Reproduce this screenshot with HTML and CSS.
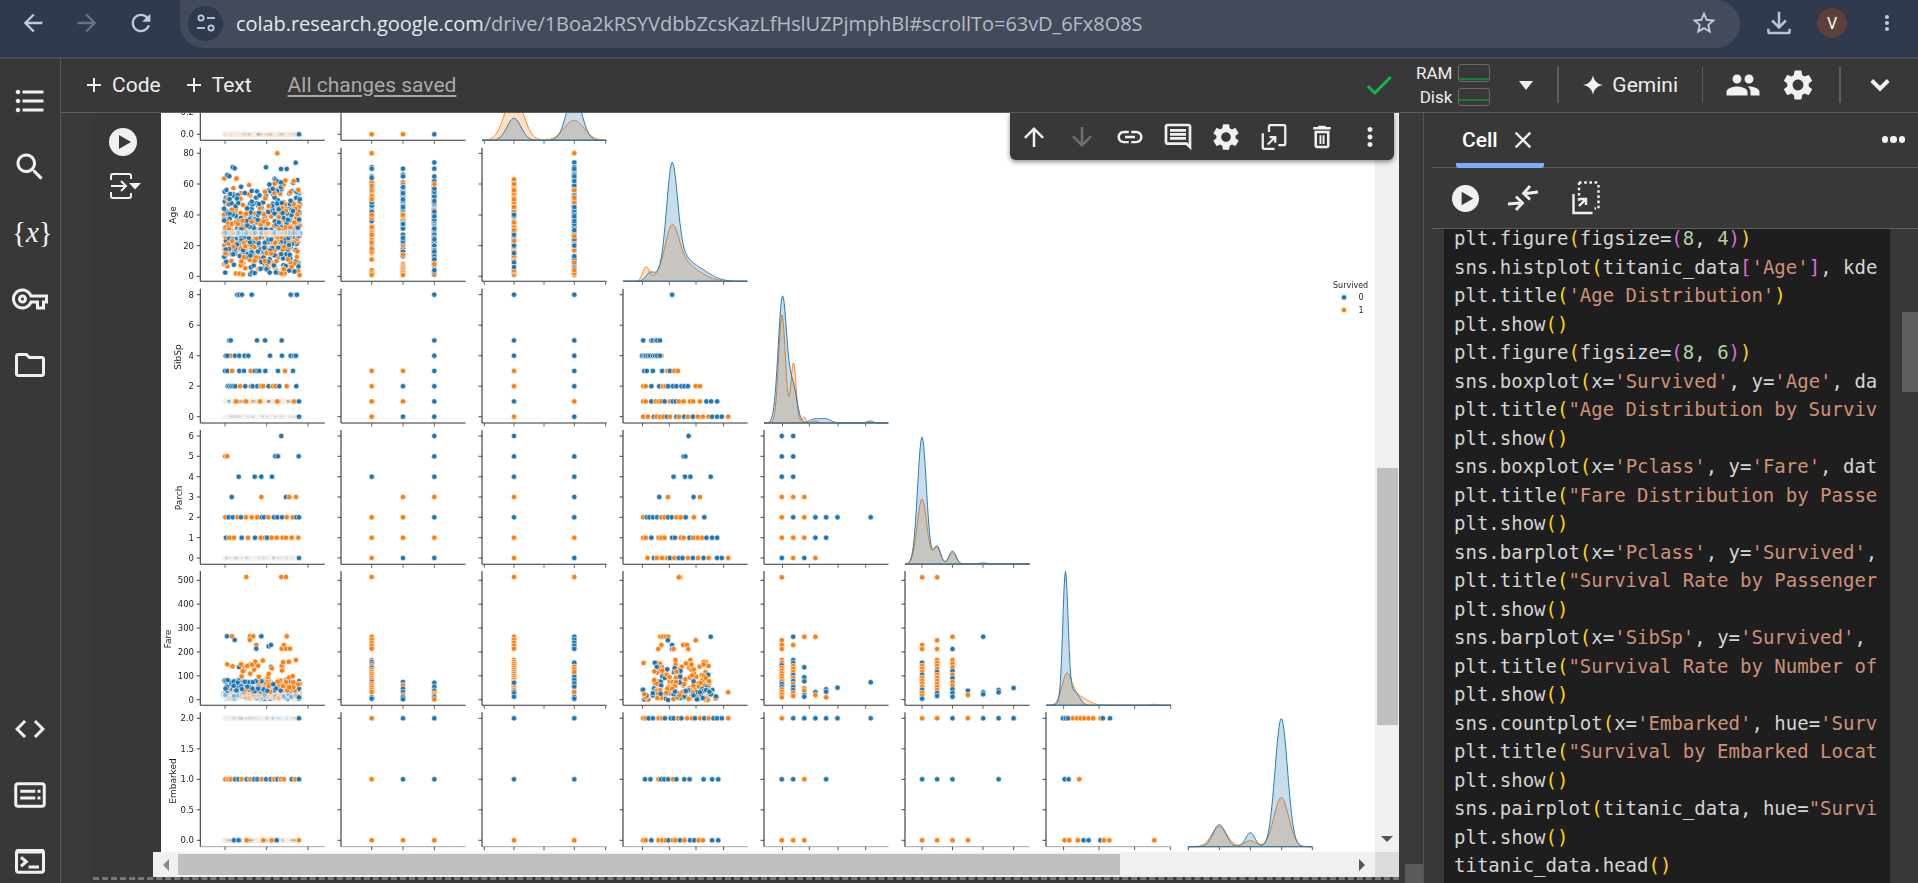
FILE: index.html
```html
<!DOCTYPE html>
<html lang="en">
<head>
<meta charset="utf-8">
<title>Colab notebook</title>
<link rel="stylesheet" href="styles.css">
</head>
<body>
<header class="chrome">
  <div class="nav-btn"><svg class="ic28" viewBox="0 0 24 24"><path class="c-nav" d="M20 11H7.83l5.59-5.59L12 4 4 12l8 8 1.41-1.41L7.83 13H20v-2z"/></svg></div>
  <div class="nav-btn"><svg class="ic28" viewBox="0 0 24 24"><path class="c-dim" d="M12 4l-1.41 1.41L16.17 11H4v2h12.17l-5.58 5.59L12 20l8-8z"/></svg></div>
  <div class="nav-btn"><svg class="ic28" viewBox="0 0 24 24"><path class="c-nav" d="M17.65 6.35C16.2 4.9 14.21 4 12 4c-4.42 0-7.99 3.58-7.99 8s3.57 8 7.99 8c3.73 0 6.84-2.55 7.73-6h-2.08c-.82 2.33-3.04 4-5.65 4-3.31 0-6-2.69-6-6s2.69-6 6-6c1.66 0 3.14.69 4.22 1.78L13 11h7V4l-2.35 2.35z"/></svg></div>
  <div class="omnibox">
    <div class="tune"><svg class="ic24" viewBox="0 0 24 24"><g class="st-nav"><circle cx="7" cy="7" r="2.6"/><path d="M13 7h8"/><circle cx="17" cy="17" r="2.6"/><path d="M3 17h8"/></g></svg></div>
    <div class="url"><span class="host">colab.research.google.com</span>/drive/1Boa2kRSYVdbbZcsKazLfHslUZPjmphBl#scrollTo=63vD_6Fx8O8S</div>
    <svg class="ic28 star" viewBox="0 0 24 24"><path class="c-nav" d="M22 9.24l-7.19-.62L12 2 9.19 8.63 2 9.24l5.46 4.73L5.82 21 12 17.27 18.18 21l-1.63-7.03L22 9.24zM12 15.4l-3.76 2.27 1-4.28-3.32-2.88 4.38-.38L12 6.1l1.71 4.04 4.38.38-3.32 2.88 1 4.28L12 15.4z"/></svg>
  </div>
  <svg class="ic30 dl" viewBox="0 0 24 24"><g class="st-nav2"><path d="M12 3v12M6.5 10l5.5 5.5 5.5-5.5"/><path d="M3.5 16.5v2.2a1.3 1.3 0 0 0 1.3 1.3h14.4a1.3 1.3 0 0 0 1.3-1.3v-2.2"/></g></svg>
  <div class="avatar">V</div>
  <svg class="ic24 menu" viewBox="0 0 24 24"><path class="c-nav" d="M12 8c1.1 0 2-.9 2-2s-.9-2-2-2-2 .9-2 2 .9 2 2 2zm0 2c-1.1 0-2 .9-2 2s.9 2 2 2 2-.9 2-2-.9-2-2-2zm0 6c-1.1 0-2 .9-2 2s.9 2 2 2 2-.9 2-2-.9-2-2-2z"/></svg>
</header>

<div class="app">
  <nav class="rail">
    <div class="rail-group">
      <svg class="ic36" viewBox="0 0 24 24"><path class="c-w" d="M4 10.5c-.83 0-1.5.67-1.5 1.5s.67 1.5 1.5 1.5 1.5-.67 1.5-1.5-.67-1.5-1.5-1.5zm0-6c-.83 0-1.5.67-1.5 1.5S3.17 7.5 4 7.5 5.5 6.83 5.5 6 4.83 4.5 4 4.5zm0 12c-.83 0-1.5.68-1.5 1.5s.68 1.5 1.5 1.5 1.5-.68 1.5-1.5-.67-1.5-1.5-1.5zM7 19h14v-2H7v2zm0-6h14v-2H7v2zm0-8v2h14V5H7z"/></svg>
      <svg class="ic36" viewBox="0 0 24 24"><path class="c-w" d="M15.5 14h-.79l-.28-.27C15.41 12.59 16 11.11 16 9.5 16 5.91 13.09 3 9.5 3S3 5.91 3 9.5 5.91 16 9.5 16c1.61 0 3.09-.59 4.23-1.57l.27.28v.79l5 4.99L20.49 19l-4.99-5zm-6 0C7.01 14 5 11.99 5 9.5S7.01 5 9.5 5 14 7.01 14 9.5 11.99 14 9.5 14z"/></svg>
      <div class="vars">{<i>x</i>}</div>
      <svg class="ic36" viewBox="0 0 24 24"><path class="c-w" d="M22 19h-6v-4h-2.68c-1.14 2.42-3.6 4-6.32 4-3.86 0-7-3.14-7-7s3.14-7 7-7c2.72 0 5.17 1.58 6.32 4H24v6h-2v4zm-4-2h2v-4h2v-2H11.94l-.23-.67C11.01 8.34 9.11 7 7 7c-2.76 0-5 2.24-5 5s2.24 5 5 5c2.11 0 4.01-1.34 4.71-3.33l.23-.67H18v4zM7 15c-1.65 0-3-1.35-3-3s1.35-3 3-3 3 1.35 3 3-1.35 3-3 3zm0-4c-.55 0-1 .45-1 1s.45 1 1 1 1-.45 1-1-.45-1-1-1z"/></svg>
      <svg class="ic36" viewBox="0 0 24 24"><path class="c-w" d="M9.17 6l2 2H20v10H4V6h5.17M10 4H4c-1.1 0-1.99.9-1.99 2L2 18c0 1.1.9 2 2 2h16c1.1 0 2-.9 2-2V8c0-1.1-.9-2-2-2h-8l-2-2z"/></svg>
    </div>
    <div class="rail-group">
      <svg class="ic36" viewBox="0 0 24 24"><path class="c-w" d="M9.4 16.6L4.8 12l4.6-4.6L8 6l-6 6 6 6 1.4-1.4zm5.2 0l4.6-4.6-4.6-4.6L16 6l6 6-6 6-1.4-1.4z"/></svg>
      <svg class="ic36" viewBox="0 0 24 24"><rect class="st-w" x="2.5" y="4.5" width="19" height="15" rx="1.5"/><path class="c-w" d="M5.5 8.5h10v2h-10zM5.5 13h10v2h-10zM17 8.5h2v2h-2zM17 13h2v2h-2z"/></svg>
      <svg class="ic36" viewBox="0 0 24 24"><rect class="st-w" x="3" y="5" width="18" height="14.5" rx="1.5"/><path class="c-w" d="M3 4h18v3H3z"/><path class="st-w" d="M6 9.5l3.5 3-3.5 3"/><path class="c-w" d="M11 15h7v2h-7z"/></svg>
    </div>
  </nav>

  <div class="main">
    <div class="colab-bar">
      <div class="add add-code"><svg class="ic24" viewBox="0 0 24 24"><path class="c-w" d="M19 13h-6v6h-2v-6H5v-2h6V5h2v6h6v2z"/></svg><span>Code</span></div>
      <div class="add add-text"><svg class="ic24" viewBox="0 0 24 24"><path class="c-w" d="M19 13h-6v6h-2v-6H5v-2h6V5h2v6h6v2z"/></svg><span>Text</span></div>
      <div class="saved">All changes saved</div>
      <div class="bar-right">
        <svg class="ic34 check" viewBox="0 0 24 24"><path class="c-green" d="M9 16.17L4.83 12l-1.42 1.41L9 19 21 7l-1.41-1.41z"/></svg>
        <div class="res">
          <span class="res-label">RAM</span><div class="res-bar"><div class="fill-ram"></div></div>
          <span class="res-label">Disk</span><div class="res-bar"><div class="fill-disk"></div></div>
        </div>
        <div class="caret"></div>
        <div class="sep sep-a"></div>
        <svg class="ic24 gem-star" viewBox="0 0 24 24"><path class="c-w" d="M12 2c.8 5.6 4.4 9.2 10 10-5.6.8-9.2 4.4-10 10-.8-5.6-4.4-9.2-10-10 5.6-.8 9.2-4.4 10-10z"/></svg>
        <span class="gemini">Gemini</span>
        <div class="sep sep-b"></div>
        <svg class="ic36 people" viewBox="0 0 24 24"><path class="c-w" d="M16 11c1.66 0 2.99-1.34 2.99-3S17.66 5 16 5c-1.66 0-3 1.34-3 3s1.34 3 3 3zm-8 0c1.66 0 2.99-1.34 2.99-3S9.66 5 8 5C6.34 5 5 6.34 5 8s1.34 3 3 3zm0 2c-2.33 0-7 1.17-7 3.5V19h14v-2.5c0-2.33-4.67-3.5-7-3.5zm8 0c-.29 0-.62.02-.97.05 1.16.84 1.97 1.97 1.97 3.45V19h6v-2.5c0-2.33-4.67-3.5-7-3.5z"/></svg>
        <svg class="ic36 gear" viewBox="0 0 24 24"><path class="c-w" d="M19.14 12.94c.04-.3.06-.61.06-.94 0-.32-.02-.64-.07-.94l2.03-1.58c.18-.14.23-.41.12-.61l-1.92-3.32c-.12-.22-.37-.29-.59-.22l-2.39.96c-.5-.38-1.03-.7-1.62-.94l-.36-2.54c-.04-.24-.24-.41-.48-.41h-3.84c-.24 0-.43.17-.47.41l-.36 2.54c-.59.24-1.13.57-1.62.94l-2.39-.96c-.22-.08-.47 0-.59.22L2.74 8.87c-.12.21-.08.47.12.61l2.03 1.58c-.05.3-.09.63-.09.94s.02.64.07.94l-2.03 1.58c-.18.14-.23.41-.12.61l1.92 3.32c.12.22.37.29.59.22l2.39-.96c.5.38 1.03.7 1.62.94l.36 2.54c.05.24.24.41.48.41h3.84c.24 0 .44-.17.47-.41l.36-2.54c.59-.24 1.13-.56 1.62-.94l2.39.96c.22.08.47 0 .59-.22l1.92-3.32c.12-.22.07-.47-.12-.61l-2.01-1.58zM12 15.6c-1.98 0-3.6-1.62-3.6-3.6s1.62-3.6 3.6-3.6 3.6 1.62 3.6 3.6-1.62 3.6-3.6 3.6z"/></svg>
        <div class="sep sep-c"></div>
        <svg class="ic36 chev" viewBox="0 0 24 24"><path class="st-w2" d="M6.5 9l5.5 5.5L17.5 9"/></svg>
      </div>
    </div>

    <div class="workspace">
      <section class="nb">
        <div class="nb-gutter"></div>
        <div class="cell">
          <div class="cell-main">
            <div class="cell-left">
              <svg class="cell-play" viewBox="0 0 28 28"><circle class="c-w" cx="14" cy="14" r="14"/><path class="c-bar" d="M10 7l12 7-12 7z"/></svg>
              <svg class="cell-out" viewBox="0 0 32 26"><g class="st-w"><path d="M2 7V3a2 2 0 0 1 2-2h16a2 2 0 0 1 2 2v3"/><path d="M2 19v4a2 2 0 0 0 2 2h16a2 2 0 0 0 2-2v-3"/><path d="M2 13h15M12 8l5 5-5 5"/></g><path class="c-w" d="M20 10h12l-6 6.5z"/></svg>
            </div>
            <div class="output">
              <div class="plot-row">
                <svg id="plot" class="plot" viewBox="161 113 1214 739"></svg>
                <div class="vtrack">
                  <div class="vthumb"></div>
                  <div class="tri-down"></div>
                </div>
              </div>
              <div class="hbar">
                <div class="harrow"><div class="tri-left"></div></div>
                <div class="hthumb"></div>
                <div class="hrest"><div class="tri-right"></div></div>
                <div class="hcorner"></div>
              </div>
            </div>
          </div>
        </div>
        <div class="cell-tools">
          <div class="tool"><svg class="ic30" viewBox="0 0 24 24"><path class="c-w" d="M4 12l1.41 1.41L11 7.83V20h2V7.83l5.58 5.59L20 12l-8-8-8 8z"/></svg></div>
          <div class="tool"><svg class="ic30" viewBox="0 0 24 24"><path class="c-off" d="M20 12l-1.41-1.41L13 16.17V4h-2v12.17l-5.58-5.59L4 12l8 8 8-8z"/></svg></div>
          <div class="tool"><svg class="ic30" viewBox="0 0 24 24"><path class="c-w" d="M3.9 12c0-1.71 1.39-3.1 3.1-3.1h4V7H7c-2.76 0-5 2.24-5 5s2.24 5 5 5h4v-1.9H7c-1.71 0-3.1-1.39-3.1-3.1zM8 13h8v-2H8v2zm9-6h-4v1.9h4c1.71 0 3.1 1.39 3.1 3.1s-1.39 3.1-3.1 3.1h-4V17h4c2.76 0 5-2.24 5-5s-2.24-5-5-5z"/></svg></div>
          <div class="tool"><svg class="ic32" viewBox="0 0 24 24"><path class="c-w" d="M21.99 4c0-1.1-.89-2-1.99-2H4c-1.1 0-2 .9-2 2v12c0 1.1.9 2 2 2h14l4 4-.01-18zM20 4v13.17L18.83 16H4V4h16zM6 12h12v2H6zm0-3h12v2H6zm0-3h12v2H6z"/></svg></div>
          <div class="tool"><svg class="ic32" viewBox="0 0 24 24"><path class="c-w" d="M19.14 12.94c.04-.3.06-.61.06-.94 0-.32-.02-.64-.07-.94l2.03-1.58c.18-.14.23-.41.12-.61l-1.92-3.32c-.12-.22-.37-.29-.59-.22l-2.39.96c-.5-.38-1.03-.7-1.62-.94l-.36-2.54c-.04-.24-.24-.41-.48-.41h-3.84c-.24 0-.43.17-.47.41l-.36 2.54c-.59.24-1.13.57-1.62.94l-2.39-.96c-.22-.08-.47 0-.59.22L2.74 8.87c-.12.21-.08.47.12.61l2.03 1.58c-.05.3-.09.63-.09.94s.02.64.07.94l-2.03 1.58c-.18.14-.23.41-.12.61l1.92 3.32c.12.22.37.29.59.22l2.39-.96c.5.38 1.03.7 1.62.94l.36 2.54c.05.24.24.41.48.41h3.84c.24 0 .44-.17.47-.41l.36-2.54c.59-.24 1.13-.56 1.62-.94l2.39.96c.22.08.47 0 .59-.22l1.92-3.32c.12-.22.07-.47-.12-.61l-2.01-1.58zM12 15.6c-1.98 0-3.6-1.62-3.6-3.6s1.62-3.6 3.6-3.6 3.6 1.62 3.6 3.6-1.62 3.6-3.6 3.6z"/></svg></div>
          <div class="tool"><svg class="ic30" viewBox="0 0 24 24"><g class="st-w15"><path d="M8 8V3.5a1 1 0 0 1 1-1h11a1 1 0 0 1 1 1v14a1 1 0 0 1-1 1h-4.5"/><path d="M3 9v11.5a1 1 0 0 0 1 1h8.5"/><path d="M7 18l6-6M8.5 12H13v4.5"/></g></svg></div>
          <div class="tool"><svg class="ic30" viewBox="0 0 24 24"><path class="c-w" d="M6 19c0 1.1.9 2 2 2h8c1.1 0 2-.9 2-2V7H6v12zM8 9h8v10H8V9zm7.5-5l-1-1h-5l-1 1H5v2h14V4h-3.5z"/><path class="c-w" d="M10 10.5h1.5v7H10zM12.5 10.5H14v7h-1.5z"/></svg></div>
          <div class="tool"><svg class="ic30" viewBox="0 0 24 24"><path class="c-w" d="M12 8c1.1 0 2-.9 2-2s-.9-2-2-2-2 .9-2 2 .9 2 2 2zm0 2c-1.1 0-2 .9-2 2s.9 2 2 2 2-.9 2-2-.9-2-2-2zm0 6c-1.1 0-2 .9-2 2s.9 2 2 2 2-.9 2-2-.9-2-2-2z"/></svg></div>
        </div>
      </section>

      <div class="split"><div class="split-thumb"></div></div>

      <aside class="panel">
        <div class="tabs">
          <div class="tab"><span class="tab-name">Cell</span><svg class="ic28" viewBox="0 0 24 24"><path class="c-w" d="M19 6.41L17.59 5 12 10.59 6.41 5 5 6.41 10.59 12 5 17.59 6.41 19 12 13.41 17.59 19 19 17.59 13.41 12z"/></svg></div>
          <div class="tab-more"><i></i><i></i><i></i></div>
        </div>
        <div class="panel-tools">
          <svg class="panel-play" viewBox="0 0 28 28"><circle class="c-w" cx="14" cy="14" r="14"/><path class="c-bar" d="M10 7l12 7-12 7z"/></svg>
          <svg class="panel-collapse" viewBox="0 0 32 28"><g class="st-w26"><path d="M31 8l-12 1.5M23 2l-6.500 7.500 6.500 6"/><path d="M1 20l12-1M9 12.500l6.500 6.500-6.500 7"/></g></svg>
          <svg class="panel-mirror" viewBox="0 0 28 34"><g class="st-w15b"><path class="dots" d="M7 1.5h17.500a2 2 0 0 1 2 2v24h-4"/><path class="dots" d="M7 1.5v20"/><path d="M1.5 13v19h19"/><path d="M7 25l7-7M8 18h6v6"/></g></svg>
        </div>
        <div class="code-wrap">
          <div class="code-clip">
<div class="ln">plt.figure<b>(</b>figsize=<u>(</u><s>8</s>, <s>4</s><u>)</u><b>)</b></div>
<div class="ln">sns.histplot<b>(</b>titanic_data<u>[</u><em>'Age'</em><u>]</u>, kde</div>
<div class="ln">plt.title<b>(</b><em>'Age Distribution'</em><b>)</b></div>
<div class="ln">plt.show<b>()</b></div>
<div class="ln">plt.figure<b>(</b>figsize=<u>(</u><s>8</s>, <s>6</s><u>)</u><b>)</b></div>
<div class="ln">sns.boxplot<b>(</b>x=<em>'Survived'</em>, y=<em>'Age'</em>, da</div>
<div class="ln">plt.title<b>(</b><em>"Age Distribution by Surviv</em></div>
<div class="ln">plt.show<b>()</b></div>
<div class="ln">sns.boxplot<b>(</b>x=<em>'Pclass'</em>, y=<em>'Fare'</em>, dat</div>
<div class="ln">plt.title<b>(</b><em>"Fare Distribution by Passe</em></div>
<div class="ln">plt.show<b>()</b></div>
<div class="ln">sns.barplot<b>(</b>x=<em>'Pclass'</em>, y=<em>'Survived'</em>,</div>
<div class="ln">plt.title<b>(</b><em>"Survival Rate by Passenger</em></div>
<div class="ln">plt.show<b>()</b></div>
<div class="ln">sns.barplot<b>(</b>x=<em>'SibSp'</em>, y=<em>'Survived'</em>,</div>
<div class="ln">plt.title<b>(</b><em>"Survival Rate by Number of</em></div>
<div class="ln">plt.show<b>()</b></div>
<div class="ln">sns.countplot<b>(</b>x=<em>'Embarked'</em>, hue=<em>'Surv</em></div>
<div class="ln">plt.title<b>(</b><em>"Survival by Embarked Locat</em></div>
<div class="ln">plt.show<b>()</b></div>
<div class="ln">sns.pairplot<b>(</b>titanic_data, hue=<em>"Survi</em></div>
<div class="ln">plt.show<b>()</b></div>
<div class="ln">titanic_data.head<b>()</b></div>
          </div>
        </div>
        <div class="code-thumb"></div>
      </aside>
    </div>
  </div>
</div>
<script src="plot.js"></script>
</body>
</html>
```
FILE: styles.css
```css
* { box-sizing: border-box; }
html, body { margin: 0; padding: 0; }
body {
  width: 1918px; height: 883px; overflow: hidden;
  display: flex; flex-direction: column;
  background: #383838; color: #fff;
  font-family: Roboto, "Liberation Sans", sans-serif;
}
svg { display: block; flex: none; }
.ic24 { width: 24px; height: 24px; }
.ic28 { width: 28px; height: 28px; }
.ic30 { width: 30px; height: 30px; }
.ic32 { width: 32px; height: 32px; }
.ic34 { width: 34px; height: 34px; }
.ic36 { width: 36px; height: 36px; }
.c-nav { fill: #c3cad6; }
.c-dim { fill: #6b7485; }
.c-w { fill: #f1f1f1; }
.c-off { fill: #6f6f6f; }
.c-bar { fill: #383838; }
.c-green { fill: #12b84e; }
.st-nav { fill: none; stroke: #c3cad6; stroke-width: 1.8; }
.st-nav2 { fill: none; stroke: #b9c3d6; stroke-width: 2; }
.st-w { fill: none; stroke: #f1f1f1; stroke-width: 2; }
.st-w15 { fill: none; stroke: #f1f1f1; stroke-width: 1.8; }
.st-w15b { fill: none; stroke: #f1f1f1; stroke-width: 2.4; }
.st-w2 { fill: none; stroke: #f1f1f1; stroke-width: 2.6; }
.st-w26 { fill: none; stroke: #f1f1f1; stroke-width: 2.8; }
.dots { stroke-dasharray: 2.6 2.6; }

/* browser chrome */
.chrome {
  height: 59px; flex: none; display: flex; align-items: flex-start;
  padding-left: 6px; background: #303a4e; border-bottom: 2px solid #434a5a;
}
.nav-btn { width: 54px; height: 46px; display: flex; align-items: center; justify-content: center; }
.omnibox {
  width: 1560px; height: 48px; margin-left: 12px; padding-left: 8px; padding-right: 22px;
  display: flex; align-items: center; background: #434b5b; border-radius: 0 24px 24px 24px;
}
.tune {
  width: 35px; height: 35px; border-radius: 50%; background: #303a4e;
  display: flex; align-items: center; justify-content: center; margin-top: -2px;
}
.url {
  margin-left: 13px; margin-top: -2px; font-size: 20px; color: #b6bbc5; white-space: nowrap;
  font-family: "Open Sans", sans-serif; letter-spacing: -.06px;
}
.host { color: #e4e7ec; }
.star { margin-left: auto; margin-top: -2px; }
.dl { margin-left: 24px; margin-top: 8px; }
.avatar {
  width: 30px; height: 30px; margin-left: 23px; margin-top: 8px; border-radius: 50%;
  background: #5d4037; color: #fff; font-size: 16px;
  display: flex; align-items: center; justify-content: center;
}
.menu { margin-left: 28px; margin-top: 11px; }

.app { flex: 1; display: flex; min-height: 0; }

/* left rail */
.rail {
  width: 61px; flex: none; border-right: 1px solid #5a5a5a; background: #383838;
  display: flex; flex-direction: column; justify-content: space-between;
  padding: 24px 0 4px;
}
.rail-group { display: flex; flex-direction: column; align-items: center; gap: 30px; }
.vars {
  width: 36px; height: 36px; text-align: center; line-height: 34px;
  font-family: "Liberation Serif", serif; font-size: 29px; color: #f1f1f1;
}

.main { flex: 1; min-width: 0; display: flex; flex-direction: column; }

/* colab toolbar */
.colab-bar {
  height: 54px; flex: none; display: flex; align-items: center; padding-bottom: 2px;
  border-bottom: 1px solid #5e5e5e; background: #383838;
  font-size: 21px; color: #eee;
}
.add { display: flex; align-items: center; gap: 6px; }
.add-code { margin-left: 21px; }
.add-text { margin-left: 21px; }
.saved { margin-left: 36px; color: #a9a9a9; text-decoration: underline; text-underline-offset: 3px; }
.bar-right { margin-left: auto; display: flex; align-items: center; }
.res {
  display: grid; grid-template-columns: 60px 32px; column-gap: 6px; row-gap: 6px;
  font-size: 17px; margin-left: -4px;
}
.res-label { text-align: right; line-height: 18px; }
.res-bar { height: 18px; border: 1px solid #6a6a6a; border-radius: 3px; }
.fill-ram { height: 15px; border-bottom: 2px solid #16803a; }
.fill-disk { height: 12px; border-bottom: 2px solid #16803a; }
.caret {
  width: 0; height: 0; margin-left: 29px; border-left: 7.5px solid transparent;
  border-right: 7.5px solid transparent; border-top: 9px solid #f1f1f1; margin-top: 2px;
}
.sep { width: 2px; height: 36px; background: #5e5e5e; }
.sep-a { margin-left: 24px; }
.gem-star { margin-left: 22px; }
.gemini { margin-left: 7px; font-size: 21px; }
.sep-b { width: 1px; margin-left: 24px; }
.people { margin-left: 22px; }
.gear { margin-left: 19px; }
.sep-c { margin-left: 23px; }
.chev { margin-left: 21px; margin-right: 20px; }

/* notebook */
.workspace { flex: 1; min-height: 0; display: flex; }
.nb { width: 1338px; flex: none; position: relative; display: flex; }
.nb-gutter { width: 32px; flex: none; background: #3a3a3a; }
.cell {
  width: 1306px; flex: none; height: 767px;
  border-bottom: 3px dashed #777;
  display: flex; flex-direction: column;
}
.cell-main { flex: 1; min-height: 0; display: flex; }
.cell-left { width: 68px; flex: none; display: flex; flex-direction: column; align-items: center; padding-top: 15px; gap: 17px; }
.cell-play { width: 28px; height: 28px; margin-left: -8px; }
.cell-out { width: 32px; height: 26px; margin-left: -5px; }
.output { width: 1238px; flex: none; display: flex; flex-direction: column; }
.plot-row { height: 739px; flex: none; display: flex; }
.plot { width: 1214px; height: 739px; background: #fff; filter: blur(.35px); }
.vtrack {
  width: 24px; flex: none; background: #f0f0f0;
  display: flex; flex-direction: column; align-items: center;
}
.vthumb { width: 21px; height: 257px; margin-top: 355px; margin-left: 1px; background: #bfbfbf; }
.tri-down {
  margin-top: auto; margin-bottom: 10px; width: 0; height: 0;
  border-left: 6px solid transparent; border-right: 6px solid transparent; border-top: 6px solid #555;
}
.hbar { height: 25px; flex: none; margin-left: -8px; display: flex; background: #f0f0f0; }
.harrow { width: 25px; flex: none; display: flex; align-items: center; justify-content: center; }
.tri-left { width: 0; height: 0; border-top: 6px solid transparent; border-bottom: 6px solid transparent; border-right: 6px solid #888; }
.hthumb { width: 942px; height: 21px; margin-top: 2px; flex: none; background: #bfbfbf; }
.hrest { flex: 1; display: flex; align-items: center; justify-content: flex-end; padding-right: 10px; }
.tri-right { width: 0; height: 0; border-top: 6px solid transparent; border-bottom: 6px solid transparent; border-left: 6px solid #555; }
.hcorner { width: 24px; flex: none; background: #dcdcdc; }

.cell-tools {
  position: absolute; left: 949px; top: 0; width: 384px; height: 47px;
  display: flex; background: #383838; border-radius: 0 0 6px 6px;
  box-shadow: 0 2px 5px rgba(0,0,0,.45);
}
.tool { width: 48px; height: 47px; display: flex; align-items: center; justify-content: center; }

/* divider between notebook and side panel */
.split { width: 25px; flex: none; position: relative; border-right: 1px solid #555; background: #3a3a3a; }
.split-thumb { position: absolute; right: 0; bottom: 0; width: 18px; height: 19px; background: #5a5a5a; }

/* side panel */
.panel { flex: 1; min-width: 0; position: relative; display: flex; flex-direction: column; padding-left: 8px; }
.tabs { height: 55px; flex: none; display: flex; justify-content: space-between; border-bottom: 1px solid #5e5e5e; }
.tab {
  width: 88px; margin-left: 24px; height: 55px; padding-left: 6px; padding-top: 13px;
  display: flex; align-items: flex-start; gap: 11px; border-bottom: 5px solid #7cacf8;
  border-radius: 0 0 3px 3px; font-size: 21px; font-weight: 500;
}
.tab-name { line-height: 28px; }
.tab-more { display: flex; gap: 2px; margin-right: 13px; margin-top: 23px; }
.tab-more i { width: 6.5px; height: 6.5px; border-radius: 50%; background: #f1f1f1; }
.panel-tools { height: 61px; flex: none; display: flex; align-items: center; border-bottom: 1px solid #5e5e5e; }
.panel-play { width: 27px; height: 27px; margin-left: 20px; }
.panel-collapse { width: 32px; height: 28px; margin-left: 28px; }
.panel-mirror { width: 28px; height: 34px; margin-left: 33px; }
.code-wrap { flex: 1; min-height: 0; margin-left: 12px; margin-right: 28px; background: #1e1e1e; overflow: hidden; }
.code-clip {
  width: 433px; height: 660px; margin-top: -5px; padding-left: 10px; overflow: hidden;
  font-family: "DejaVu Sans Mono", monospace; font-size: 19px; color: #d4d4d4;
}
.ln { height: 28.5px; line-height: 28.5px; white-space: pre; }
.ln b { font-weight: 400; color: #ffd700; }
.ln u { text-decoration: none; color: #da70d6; }
.ln s { text-decoration: none; color: #b5cea8; }
.ln em { font-style: normal; color: #ce9178; }
.code-thumb { position: absolute; right: 0; top: 199px; width: 16px; height: 80px; background: #5f5f5f; }

/* plot text */
.pt { font-family: "DejaVu Sans", sans-serif; font-size: 8px; fill: #262626; }
.pt-tick { font-size: 8.5px; }
.pt-label { font-size: 9px; }
```
FILE: plot.js
```js
(function () {
  var svg = document.getElementById('plot');
  var NS = 'http://www.w3.org/2000/svg';
  var B = '#1f77b4', O = '#ff7f0e';

  var seed = 12345;
  function r() {
    seed |= 0; seed = seed + 0x6D2B79F5 | 0;
    var t = Math.imul(seed ^ seed >>> 15, 1 | seed);
    t = t + Math.imul(t ^ t >>> 7, 61 | t) ^ t;
    return ((t ^ t >>> 14) >>> 0) / 4294967296;
  }
  function gauss() { return Math.sqrt(-2 * Math.log(r() + 1e-9)) * Math.cos(6.2832 * r()); }
  function el(n, a, parent) {
    var e = document.createElementNS(NS, n);
    for (var k in a) e.setAttribute(k, a[k]);
    (parent || svg).appendChild(e);
    return e;
  }
  function dot(x, y, c) { el('circle', { cx: x.toFixed(1), cy: y.toFixed(1), r: 2.7, fill: c, stroke: '#fff', 'stroke-width': .6 }); }
  function text(x, y, s, anchor, rot, cls) {
    var a = { x: x, y: y, 'class': 'pt ' + (cls || ''), 'text-anchor': anchor || 'end' };
    if (rot) a.transform = 'rotate(-90 ' + x + ' ' + y + ')';
    el('text', a).textContent = s;
  }
  function line(x1, y1, x2, y2, c, w) { el('line', { x1: x1, y1: y1, x2: x2, y2: y2, stroke: c || '#333', 'stroke-width': w || 1.1 }); }

  /* zoom-crop coordinate helpers */
  var ax = function (v) { return v / 3 + 160; };      /* columns 1-3 */
  var bx = function (v) { return v / 2.8 + 620; };    /* columns 4-7 */
  var y7 = function (v) { return v / 3 + 420; };
  var y9 = function (v) { return v / 3 + 440; };
  var y6 = function (v) { return v / 3 + 110; };

  /* "b65 o72" -> dots on a row */
  function row(fx, y, s) {
    s.split(' ').forEach(function (t) {
      dot(fx(+t.slice(1)), y, t[0] === 'b' ? B : O);
    });
  }
  function mix(x1, x2, y, n, pO) {
    for (var i = 0; i < n; i++) dot(x1 + r() * (x2 - x1), y, r() < pO ? O : B);
  }
  function pale(x1, x2, y, tint, marks) {
    el('line', { x1: x1, y1: y, x2: x2, y2: y, stroke: tint, 'stroke-width': 5.4, 'stroke-linecap': 'round' });
    for (var i = 0; i < 26; i++) {
      el('circle', { cx: x1 + r() * (x2 - x1), cy: y, r: 1.4, fill: r() < .5 ? B : O, opacity: marks });
    }
  }

  /* axes */
  var colX = [200.3, 341, 482, 623, 764, 905, 1046, 1188], W = 124.6;
  var rows = [
    { top: 6, bot: 140.3, diag: 2, ticks: [[134.3, '0.0']], label: null },
    { top: 147.7, bot: 281.3, diag: 3, ticks: [[276.3, '0'], [245.6, '20'], [215, '40'], [184, '60'], [153.3, '80']], label: ['Age', 175.5, 215] },
    { top: 288.7, bot: 423, diag: 4, ticks: [[416.7, '0'], [386.2, '2'], [355.7, '4'], [325.2, '6'], [294.7, '8']], label: ['SibSp', 181, 357] },
    { top: 430, bot: 564.3, diag: 5, ticks: [[558, '0'], [537.7, '1'], [517.3, '2'], [497, '3'], [476.7, '4'], [456.3, '5'], [436, '6']], label: ['Parch', 181.5, 498] },
    { top: 571, bot: 705.3, diag: 6, ticks: [[699.7, '0'], [675.8, '100'], [651.9, '200'], [628.1, '300'], [604.2, '400'], [580.3, '500']], label: ['Fare', 171, 639] },
    { top: 712.3, bot: 846.7, diag: 7, ticks: [[840.3, '0.0'], [809.8, '0.5'], [779.3, '1.0'], [748.8, '1.5'], [718.3, '2.0']], label: ['Embarked', 176, 781] }
  ];
  var xTicks = [
    [225, 266.7, 308], [371.7, 403, 434.3], [484.3, 514, 544, 574.3, 605.7],
    [642.5, 669.3, 696, 723.6], [782.5, 809.3, 838, 865.7], [922, 952.5, 983, 1013.6],
    [1063.6, 1099, 1134.6, 1170.7], [1188.3, 1219.3, 1250.3, 1281.7, 1312.3]
  ];
  rows.forEach(function (R, ri) {
    var last = ri === rows.length - 1;
    for (var c = 0; c <= R.diag; c++) {
      var x = colX[c], isDiag = c === R.diag;
      line(x, R.bot, x + W, R.bot, last ? '#b9b9b9' : '#333', last ? 1.3 : 1.1);
      xTicks[c].forEach(function (t) { line(t, R.bot, t, R.bot + 3.5, last ? '#444' : '#555', .9); });
      if (!isDiag) {
        line(x, R.top, x, R.bot, '#333', 1.1);
        R.ticks.forEach(function (t) {
          line(x - 3.5, t[0], x, t[0], '#333', .9);
          if (c === 0) text(194, t[0] + 3, t[1], 'end', false, 'pt-tick');
        });
      }
    }
    if (R.label) text(R.label[1], R.label[2], R.label[0], 'middle', true, 'pt-label');
  });
  text(194, 115, '0.2', 'end', false, 'pt-tick');

  /* kernel density curves (orange first, so the overlap turns grey) */
  function kde(x1, x2, base, comps, color) {
    var d = 'M' + x1 + ' ' + base;
    for (var x = x1; x <= x2; x += .75) {
      var h = 0;
      comps.forEach(function (k) { var u = (x - k[0]) / k[2]; h += k[1] * Math.exp(-.5 * u * u); });
      d += 'L' + x.toFixed(2) + ' ' + (base - h).toFixed(2);
    }
    d += 'L' + x2 + ' ' + base + 'Z';
    el('path', { d: d, fill: color, 'fill-opacity': .25, stroke: color, 'stroke-width': 1, 'stroke-opacity': .95 });
  }
  kde(482, 606, 140.3, [[514, 46, 9], [574, 20, 10]], O);
  kde(482, 606, 140.3, [[514, 22, 7], [574, 46, 7.5]], B);
  kde(623, 747, 281.3, [[672, 36, 6.5], [676, 21, 13], [697, 6, 12], [646, 13, 3.2]], O);
  kde(623, 747, 281.3, [[672, 90, 5.2], [675, 28, 11], [697, 12, 13], [650, 7, 4]], B);
  kde(764, 888, 423, [[782, 108, 3.4], [793.5, 60, 2.6], [804, 6, 2], [815, 2, 3]], O);
  kde(764, 888, 423, [[782.5, 126, 4.3], [793, 36, 4], [815, 4, 5], [826, 4, 5], [870, 2, 3]], B);
  kde(905, 1030, 564, [[922, 65, 4.8], [937, 18, 3.5], [952.5, 11, 3.5]], O);
  kde(905, 1030, 564, [[922, 127, 4.4], [937, 17, 3.5], [952.5, 13, 3.5], [983, 1, 4]], B);
  kde(1046, 1171, 705.3, [[1066.8, 28, 5], [1078, 9, 9], [1154, 1, 4]], O);
  kde(1046, 1171, 705.3, [[1065.4, 122, 2.6], [1069, 14, 6], [1077, 6, 4]], B);
  kde(1188, 1312, 846.7, [[1281.3, 49, 7.4], [1219.3, 20, 7.6], [1250.3, 6, 6]], O);
  kde(1188, 1312, 846.7, [[1281.3, 128, 6.2], [1219.3, 22, 6.3], [1250.3, 14, 4.6]], B);

  /* shared row positions */
  var yAge = function (a) { return 276.3 - 1.5375 * a; };
  var yS = function (s) { return 416.7 - 15.25 * s; };
  var yP = function (p) { return 558 - 20.33 * p; };
  var yF = function (f) { return 699.7 - .2387 * f; };
  var yE = function (e) { return 840.3 - 61 * e; };
  var cl = [371.7, 403, 434.3], sx = [514, 574.3];
  function put(xs, y, s) { for (var i = 0; i < s.length; i++) if (s[i] !== '.') dot(xs[i], y, s[i] === 'b' ? B : O); }

  /* Sex row */
  pale(225, 297, 134.3, '#f8ebe0', .16); dot(299, 134.3, B);
  put(cl, 134.3, 'oob');

  /* Age row */
  var i, a;
  for (i = 0; i < 520; i++) {
    a = 29 + 13 * gauss();
    if (a < .5) a = r() * 12; if (a > 66) a = 30 + r() * 30;
    dot(224 + r() * 76, yAge(a), r() < (a < 9 ? .55 : .42) ? O : B);
  }
  for (i = 0; i < 50; i++) dot(224 + r() * 76, yAge(.8 + r() * 16), r() < .55 ? O : B);
  for (i = 0; i < 60; i++) dot(224 + r() * 76, yAge(40 + r() * 23), r() < .38 ? O : B);
  mix(224, 300, 233, 60, .3);
  el('rect', { x: 222, y: 230.5, width: 79, height: 6, fill: '#eef3f7', opacity: .6, rx: 2 });
  [[352, 130, O], [407, 158, B], [318, 172, B], [218, 172, B], [224, 175, B], [380, 177, B], [363, 177, B], [202, 195, B], [208, 199, B], [415, 240, O], [401, 213, O]].forEach(function (p) {
    dot(ax(p[0]), y6(p[1]), p[2]);
  });

  function stack(x, vals, pO, fy) {
    vals.forEach(function (v) { dot(x, fy(v), r() < pO ? O : B); });
  }
  function ints(a, b, n) { var o = []; for (var k = 0; k < n; k++) o.push(a + Math.floor(r() * (b - a))); return o; }
  stack(cl[0], ints(15, 63, 100), .72, yAge); stack(cl[0], [65, 64, 71, 70], 0, yAge);
  stack(cl[0], [11, 4, 2, .9], 1, yAge); dot(cl[0], yAge(80), O);
  stack(cl[1], ints(13, 62, 90), .4, yAge); stack(cl[1], [70, 66, 65], 0, yAge); stack(cl[1], [8, 7, 6, 5, 4, 3, 2, 1, .8], .85, yAge);
  stack(cl[2], ints(15, 63, 110), .2, yAge); stack(cl[2], [74, 70, 65], 0, yAge); stack(cl[2], ints(1, 14, 16), .4, yAge);
  stack(sx[0], ints(11, 63, 90), .82, yAge); stack(sx[0], [63, 60, 56, 50, 45, 30, 10, 2, 1, 3, 4], 1, yAge); stack(sx[0], [40, 27, 20, 15, 9, 6], 0, yAge);
  stack(sx[1], ints(1, 72, 120), .13, yAge); stack(sx[1], [74, 71, 70, 65, 62], 0, yAge); stack(sx[1], [1, 2, 4, 26, 51, 56], 1, yAge); dot(sx[1], yAge(80), O);

  /* SibSp row */
  var aid = ax;
  row(aid, yS(8), 'b232 b238 b246 b275 b392 b408 b411');
  row(aid, yS(5), 'b208 b212 b291 b315 b365');
  row(aid, yS(4), 'b197 o211 b202 b225 b238 o252 b254 b265 b330 b366 b392 b402 b408');
  row(aid, yS(3), 'b195 b202 o216 b238 b252 o272 b284 b292 b298 b316 b354 o375 b399');
  row(aid, yS(2), 'b203 b208 b214 b220 b226 o240 b256 o272 b278 b292 o303 o310 b326 o338 o346 b358 o380 b409');
  pale(225, 297, yS(1), '#f8ebe0', .35); row(aid, yS(1), 'b230 o228 o258 o300 o352 o402 b417');
  pale(225, 297, yS(0), '#f1f2f4', .12); dot(299, yS(0), B);
  [[8, '..b', 'bb'], [5, '..b', 'bb'], [4, '..b', 'bb'], [3, 'oob', 'ob'], [2, 'obb', 'ob'], [1, 'oob', 'bo'], [0, 'obb', 'ob']].forEach(function (t) {
    put(cl, yS(t[0]), t[1]); put(sx, yS(t[0]), t[2]);
  });
  row(bx, yS(8), 'b146');
  row(bx, yS(5), 'b65 b88 b92 b100 b104 b112');
  row(bx, yS(4), 'b62 b68 b72 b78 b84 b92 b98 b104 o116 b112');
  row(bx, yS(3), 'b68 b75 b92 b118 o133 b140 o152 o162');
  row(bx, yS(2), 'o65 o72 b88 b110 o120 o128 b135 b148 b158 b172 b180 b190 o212 o224');
  row(bx, yS(1), 'o65 o72 b88 o100 o108 o115 b125 o140 b148 b156 o165 o178 o196 o205 o224 b242 b255 b272');
  row(bx, yS(0), 'o65 o78 b95 o102 o112 o122 b132 o140 b158 o165 b180 o190 b204 o218 o232 o248 b258 b272 b285 o303');

  /* Parch row */
  row(aid, y7(48), 'b364');
  row(aid, y7(109), 'o196 o202 b346 b354 b416');
  row(aid, y7(170), 'b236 b284 b304 b336');
  row(aid, y7(231), 'b215 o304 b378 o388 o408');
  row(aid, y7(292), 'o196 b206 b218 o232 b243 o258 o275 o292 b305 b312 o325 b342 b352 b366 o380 o398 b409 b417');
  row(aid, y7(353), 'b198 o208 o222 b245 o264 b285 o302 o315 b322 o335 o350 o368 o378 o395 o415');
  pale(225, 297, yP(0), '#f1f2f4', .12); dot(299, yP(0), B);
  [[6, '..b', 'b.'], [5, '..b', 'bb'], [4, 'b.b', 'bb'], [3, '.oo', 'ob'], [2, 'oob', 'bb'], [1, 'ooo', 'oo'], [0, 'obb', 'ob']].forEach(function (t) {
    put(cl, yP(t[0]), t[1]); put(sx, yP(t[0]), t[2]);
  });
  row(bx, yP(6), 'b192');
  row(bx, yP(5), 'b178 b183');
  row(bx, yP(4), 'b150 b182 b197 b254');
  row(bx, yP(3), 'b110 o134 b206 o224');
  row(bx, yP(2), 'o65 b75 b82 b92 b104 o115 o125 b135 b145 o158 o170 b184 o207 b236');
  row(bx, yP(1), 'o65 o72 b88 o108 o116 o125 b146 b154 o170 o178 b195 o205 o218 o230 b242 b258 b272');
  row(bx, yP(0), 'o77 b95 o103 o118 o132 b140 o152 b165 b175 o190 b204 o218 b234 o248 b272 b285 o303');
  row(bx, yP(6), 'b453 b485'); row(bx, yP(5), 'b453 b485'); row(bx, yP(4), 'b453 b485');
  row(bx, yP(3), 'o453 o485 o516');
  row(bx, yP(2), 'o453 b485 o516 b547 b577 b609 b702');
  row(bx, yP(1), 'o453 o485 o516 b547 b577');
  row(bx, yP(0), 'b453 o485 b516 o547');

  /* Fare row */
  for (i = 0; i < 300; i++) dot(224 + r() * 76, yF(4 + r() * 28), r() < .65 ? B : O);
  el('rect', { x: 222, y: 690, width: 79, height: 11, fill: '#fff', opacity: .5 });
  for (i = 0; i < 60; i++) dot(224 + r() * 76, yF(3 + r() * 22), r() < .6 ? B : O);
  el('rect', { x: 222, y: 693, width: 79, height: 7, fill: '#fff', opacity: .45 });
  for (i = 0; i < 190; i++) {
    var px = 224 + r() * 76;
    dot(px, yF(32 + r() * 52), r() < (px < 262 ? .2 : .68) ? O : B);
  }
  for (i = 0; i < 28; i++) dot(232 + r() * 68, yF(90 + r() * 75), r() < .82 ? O : B);
  [[259, 471, O], [364, 471, O], [378, 471, O], [201, 649, B], [216, 649, O], [224, 660, B], [270, 649, O], [280, 649, O], [269, 660, O], [304, 649, B], [380, 649, O], [289, 675, O], [289, 686, B], [326, 679, B], [333, 675, B], [365, 686, O], [372, 675, O], [378, 686, O], [390, 686, O], [202, 733, O], [243, 733, O], [408, 720, O], [414, 830, O], [417, 832, B]].forEach(function (p) {
    dot(ax(p[0]), y7(p[1]), p[2]);
  });
  function colStack(x, list, pO, fy) {
    list.forEach(function (v) { dot(x, fy(v), r() < pO ? O : B); });
  }
  function seq(a, b, st) { var o = []; for (var v = a; v <= b; v += st) o.push(v); return o; }
  /* pclass */
  colStack(cl[0], seq(650, 686, 9), 1, y7); colStack(cl[0], seq(720, 820, 6), .96, y7);
  dot(cl[0], y7(471), O); colStack(cl[0], [832, 836], 0, y7);
  colStack(cl[1], [786, 796, 806, 816, 826, 832, 838], .25, y7);
  colStack(cl[2], [788, 800, 812, 820, 826, 832, 838], .2, y7);
  /* sex */
  colStack(sx[0], seq(650, 686, 9), 1, y7); colStack(sx[0], seq(720, 810, 6), .98, y7);
  colStack(sx[0], [788, 815, 820, 830], 0, y7); dot(sx[0], y7(471), O);
  dot(sx[1], y7(471), O); colStack(sx[1], seq(650, 686, 9), 0, y7);
  colStack(sx[1], [728, 760, 770, 780, 790, 800, 815, 830, 836], 0, y7);
  colStack(sx[1], [740, 748, 756, 816], 1, y7);
  /* age */
  var f4 = [[168, 412, O], [165, 412, O], [113, 590, O], [120, 590, O], [128, 590, O], [135, 590, O], [254, 590, B], [134, 601, B], [116, 615, O], [146, 615, B], [177, 615, O], [188, 615, O], [212, 601, O], [107, 627, O], [146, 627, B], [150, 627, O], [191, 627, O], [66, 669, O], [155, 660, O], [197, 660, O], [236, 669, O]];
  f4.forEach(function (p) { dot(bx(p[0]), y9(p[1]), p[2]); });
  for (i = 0; i < 95; i++) dot(bx(95 + r() * 155), y9(665 + r() * 85), r() < .8 ? O : B);
  for (i = 0; i < 100; i++) dot(bx(60 + r() * 215), y9(745 + r() * 35), r() < .45 ? O : B);
  row(bx, y9(757), 'o303');
  /* sibsp */
  row(bx, y9(412), 'o453');
  row(bx, y9(590), 'b485 o516 o547');
  row(bx, y9(601), 'o453'); row(bx, y9(615), 'o453 o485'); row(bx, y9(627), 'o453');
  colStack(bx(453), seq(660, 778, 8), .6, y9); colStack(bx(485), seq(660, 772, 9), .6, y9); colStack(bx(516), [682, 712, 724, 745, 752, 765, 770], .5, y9);
  row(bx, y9(757), 'b547'); row(bx, y9(765), 'o547'); row(bx, y9(748), 'b577'); row(bx, y9(755), 'b577'); row(bx, y9(772), 'o577'); row(bx, y9(743), 'b609'); row(bx, y9(727), 'b702');
  /* parch */
  row(bx, y9(412), 'o846 o888');
  row(bx, y9(590), 'o931 b1017');
  row(bx, y9(601), 'o888'); row(bx, y9(615), 'o846'); row(bx, y9(627), 'o846 o888 b931');
  colStack(bx(846), seq(668, 776, 9), .6, y9); colStack(bx(888), seq(660, 772, 9), .7, y9); colStack(bx(931), seq(660, 772, 11), .5, y9);
  row(bx, y9(752), 'b974'); row(bx, y9(765), 'o974'); row(bx, y9(757), 'b1017'); row(bx, y9(763), 'b1017');
  row(bx, y9(750), 'b1060'); row(bx, y9(757), 'b1060'); row(bx, y9(744), 'b1102');

  /* Embarked row */
  pale(225, 297, yE(2), '#eef1f4', .14); dot(299, yE(2), B);
  row(aid, yE(1), 'o196 o205 o212 b225 b235 o245 b260 o270 b282 b292 o305 b318 b332 o342 b352 o362 o372 b395 o405 b417');
  el('line', { x1: 225, y1: yE(1), x2: 297, y2: yE(1), stroke: '#fff', 'stroke-width': 1, opacity: .2 });
  pale(225, 297, yE(0), '#f8ebe0', .3); row(aid, yE(0), 'b222 b236 o260 o310 o335 b350 o417');
  [[2, 'obb', 'bb'], [1, 'obb', 'bb'], [0, 'ooo', 'oo']].forEach(function (t) {
    put(cl, yE(t[0]), t[1]); put(sx, yE(t[0]), t[2]);
  });
  row(bx, y9(835), 'o65 o72 b80 b92 o108 o118 b126 b142 b150 o162 b172 o188 o202 b210 o224 b236 o248 b262 b272 b285 o303');
  row(bx, y9(1018), 'b70 b85 o108 b115 b124 b135 o148 b158 b180 b195 b234 b258 b275');
  row(bx, y9(1201), 'o65 o72 b88 o108 o118 o128 b136 o148 o155 b168 o180 b196 b208 o220 o232 b258 b275');
  row(bx, y9(835), 'o453 b485 b516 b547 b577 b609 b702');
  row(bx, y9(1018), 'b453 b485 o516 b577');
  row(bx, y9(1201), 'o453 o485 o516');
  row(bx, y9(835), 'o846 o888 b931 o974 b1017 b1060 b1102');
  row(bx, y9(1018), 'b846 b888 b931 b1060');
  row(bx, y9(1201), 'o846 o888 o931 o974');
  row(bx, y9(835), 'b1240 b1248 b1255 o1268 o1280 o1290 o1300 o1312 o1325 o1345 b1352 b1372');
  row(bx, y9(1018), 'b1245 b1256 o1286');
  row(bx, y9(1201), 'o1245 o1258 o1282 b1298 b1312 b1345 o1355 o1370 o1496');

  /* Legend */
  text(1333, 288, 'Survived', 'start');
  dot(1344, 297.5, B); text(1358.5, 300.3, '0', 'start');
  dot(1344, 310, O); text(1358.5, 313, '1', 'start');
})();
```
